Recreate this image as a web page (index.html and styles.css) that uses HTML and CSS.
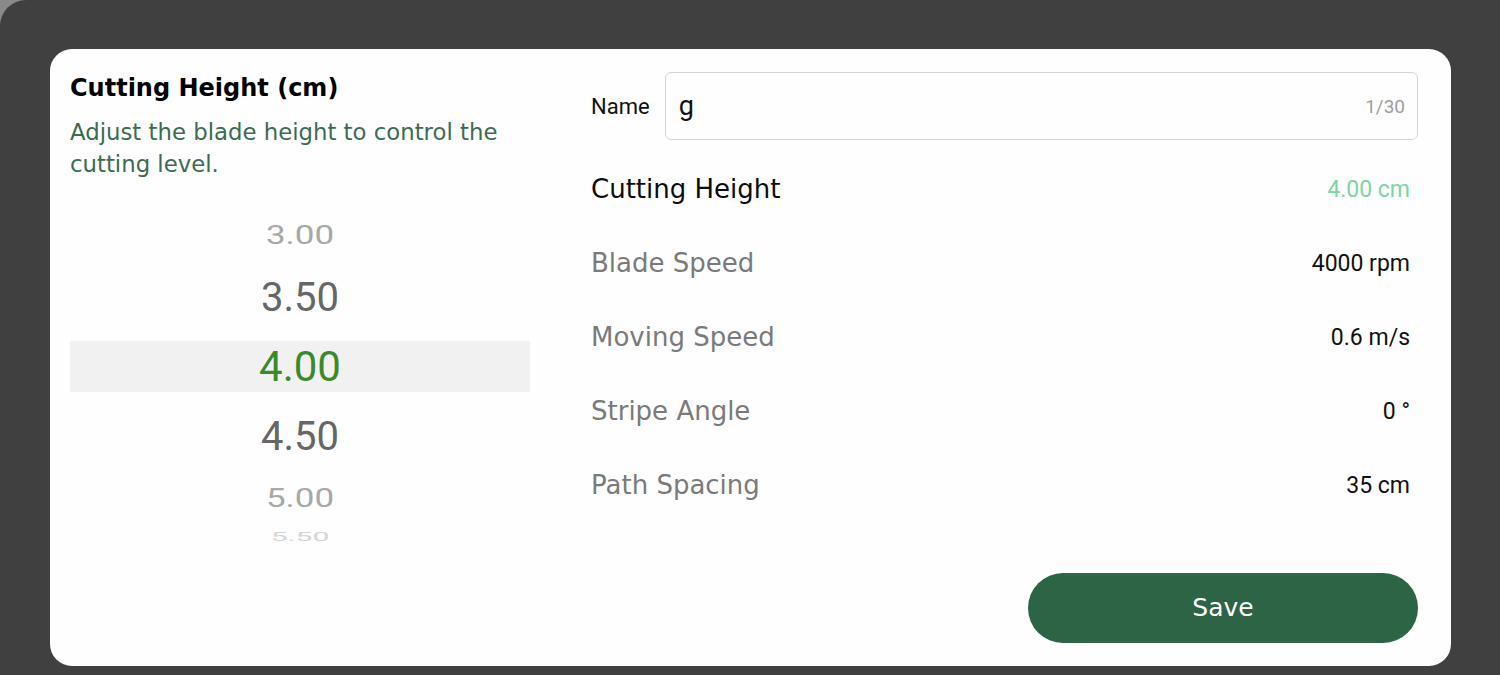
FILE: index.html
```html
<!DOCTYPE html>
<html lang="en">
<head>
    <meta charset="UTF-8">
    <meta name="viewport" content="width=device-width, initial-scale=1.0">
    <title>Cutting Height</title>
    <link rel="stylesheet" href="styles.css">
</head>
<body>
    <div class="screen">
        <div class="dialog">
            <div class="picker-col">
                <h2 class="picker-title">Cutting Height (cm)</h2>
                <p class="picker-desc">Adjust the blade height to control the cutting level.</p>

                <div class="wheel">
                    <div class="wheel-item far"><span>3.00</span></div>
                    <div class="wheel-item near"><span>3.50</span></div>
                    <div class="wheel-item selected"><span>4.00</span></div>
                    <div class="wheel-item near"><span>4.50</span></div>
                    <div class="wheel-item far"><span>5.00</span></div>
                    <div class="wheel-item farthest"><span>5.50</span></div>
                </div>
            </div>

            <div class="settings-col">
                <div class="name-row">
                    <label for="nameInput">Name</label>
                    <div class="name-field">
                        <input id="nameInput" type="text" value="g" maxlength="30">
                        <span class="counter">1/30</span>
                    </div>
                </div>

                <div class="setting-row active">
                    <span class="setting-label">Cutting Height</span>
                    <span class="setting-value">4.00 cm</span>
                </div>
                <div class="setting-row">
                    <span class="setting-label">Blade Speed</span>
                    <span class="setting-value">4000 rpm</span>
                </div>
                <div class="setting-row">
                    <span class="setting-label">Moving Speed</span>
                    <span class="setting-value">0.6 m/s</span>
                </div>
                <div class="setting-row">
                    <span class="setting-label">Stripe Angle</span>
                    <span class="setting-value">0 °</span>
                </div>
                <div class="setting-row">
                    <span class="setting-label">Path Spacing</span>
                    <span class="setting-value">35 cm</span>
                </div>

                <div class="actions">
                    <button class="save-btn" type="button">Save</button>
                </div>
            </div>
        </div>
    </div>
</body>
</html>
```

FILE: styles.css
```css
body {
    margin: 0;
    padding: 0;
    background-color: #8a8a8a;
    font-family: "DejaVu Sans", sans-serif;
    overflow: hidden;
}

.screen {
    height: 675px;
    background-color: #404040;
    border-top-left-radius: 26px;
    padding: 49px 49px 0 50px;
    box-sizing: border-box;
}

.dialog {
    display: grid;
    grid-template-columns: 460px 1fr;
    column-gap: 61px;
    background-color: #fefefe;
    border-radius: 22px;
    padding: 23px 33px 23px 20px;
    height: 617px;
    box-sizing: border-box;
}

/* left side: wheel picker */
.picker-title {
    margin: 0;
    font-size: 24px;
    line-height: 32px;
    font-weight: 700;
    color: #000;
}

.picker-desc {
    margin: 12px 0 0;
    font-size: 22.8px;
    line-height: 32px;
    color: #3d6b52;
}

.wheel {
    margin-top: 37px;
    display: flex;
    flex-direction: column;
    font-family: Roboto, sans-serif;
}

.wheel-item {
    display: flex;
    align-items: center;
    justify-content: center;
    color: #666;
}

.wheel-item.far {
    height: 36px;
    font-size: 35px;
    color: #a8a8a8;
}

.wheel-item.far span {
    transform: scaleY(0.72);
}

.wheel-item.near {
    height: 88px;
    font-size: 40px;
}

.wheel-item.selected {
    height: 51px;
    font-size: 42px;
    color: #3a8a2c;
    background-color: #f1f1f1;
}

.wheel-item.farthest {
    height: 40px;
    font-size: 30px;
    color: #d4d4d4;
}

.wheel-item.farthest span {
    transform: scaleY(0.4);
}

/* right side: settings */
.name-row {
    display: flex;
    align-items: center;
    gap: 15px;
    height: 68px;
    margin-bottom: 10px;
}

.name-row label {
    font-family: Roboto, sans-serif;
    font-size: 22px;
    color: #111;
}

.name-field {
    flex: 1;
    display: flex;
    align-items: center;
    height: 68px;
    border: 1.5px solid #d4d4d4;
    border-radius: 6px;
    padding: 0 12px 0 13px;
    box-sizing: border-box;
}

.name-field input {
    flex: 1;
    border: none;
    outline: none;
    background: transparent;
    font-family: Roboto, sans-serif;
    font-size: 27px;
    color: #111;
    padding: 0;
}

.counter {
    font-family: Roboto, sans-serif;
    font-size: 19px;
    color: #9e9e9e;
}

.setting-row {
    display: flex;
    align-items: center;
    justify-content: space-between;
    height: 74px;
    padding-right: 8px;
}

.setting-label {
    font-size: 26px;
    color: #7a7a7a;
    padding-top: 3px;
}

.setting-value {
    font-family: Roboto, sans-serif;
    font-size: 23px;
    color: #111;
    padding-top: 5px;
}

.setting-row.active .setting-label {
    color: #0c0c0c;
}

.setting-row.active .setting-value {
    color: #7fd4a5;
}

.actions {
    display: flex;
    justify-content: flex-end;
    margin-top: 53px;
}

.save-btn {
    width: 390px;
    height: 70px;
    border: none;
    border-radius: 35px;
    background-color: #2d6446;
    color: #fff;
    font-family: "DejaVu Sans", sans-serif;
    font-size: 25px;
    padding-bottom: 2px;
    cursor: pointer;
}
```
